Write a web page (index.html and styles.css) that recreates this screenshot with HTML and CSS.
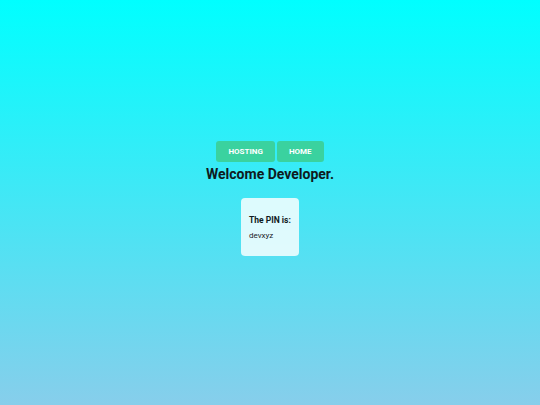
FILE: index.html
```html
<!DOCTYPE html>
<html lang="en">
<head>
<meta charset="utf-8">
<title>Welcome Developer</title>
<link rel="stylesheet" href="styles.css">
</head>
<body>
<main class="page">
  <nav class="nav">
    <a class="btn" href="#">Hosting</a>
    <a class="btn" href="#">Home</a>
  </nav>
  <h1 class="title">Welcome Developer.</h1>
  <section class="card">
    <h3 class="card-title">The PIN is:</h3>
    <p class="card-pin">devxyz</p>
  </section>
</main>
</body>
</html>
```
FILE: styles.css
```css
html, body {
  margin: 0;
  padding: 0;
}
body {
  font-family: Roboto, "Liberation Sans", sans-serif;
  background: linear-gradient(to bottom, #00ffff 0%, #87ceeb 100%);
  min-height: 100vh;
  color: #0f1a20;
}
.page {
  box-sizing: border-box;
  min-height: 100vh;
  display: flex;
  flex-direction: column;
  align-items: center;
  justify-content: center;
  padding-bottom: 8px;
}
.nav {
  display: flex;
  gap: 2px;
}
.btn {
  display: block;
  background: #3ad29f;
  color: #ffffff;
  font-size: 8px;
  font-weight: 700;
  line-height: 9px;
  text-transform: uppercase;
  text-decoration: none;
  padding: 6px 12px;
  border-radius: 3px;
}
.title {
  margin: 2px 0 0;
  font-size: 14px;
  line-height: 20px;
  font-weight: 700;
}
.card {
  margin-top: 14px;
  box-sizing: border-box;
  width: 58px;
  height: 58px;
  padding: 0 8px;
  background: rgba(255, 255, 255, 0.82);
  border-radius: 4px;
}
.card-title {
  margin: 17px 0 6px;
  font-size: 8.5px;
  line-height: 10px;
  font-weight: 700;
  white-space: nowrap;
}
.card-pin {
  margin: 0;
  font-size: 8px;
  line-height: 9.4px;
  font-weight: 400;
  color: #1a2228;
}
```
